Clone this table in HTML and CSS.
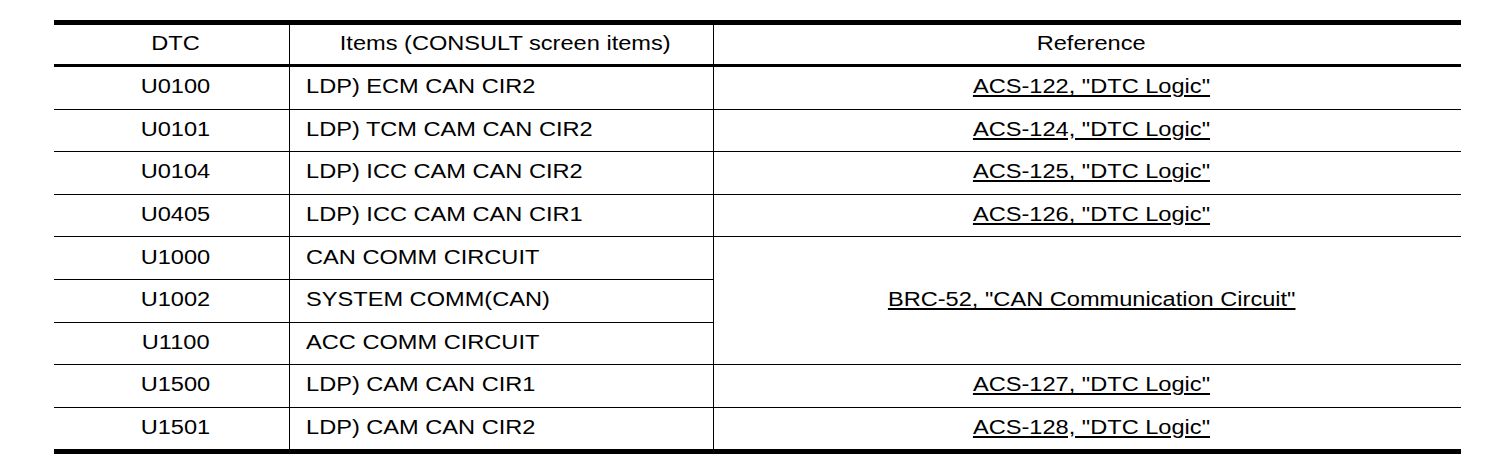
FILE: index.html
```html
<!DOCTYPE html>
<html>
<head>
<meta charset="utf-8">
<link rel="stylesheet" href="styles.css">
</head>
<body>
<table class="dtc">
  <thead>
    <tr><th class="c1"><span class="t">DTC</span></th><th class="c2"><span class="t">Items (CONSULT screen items)</span></th><th class="c3"><span class="t">Reference</span></th></tr>
  </thead>
  <tbody>
    <tr><td class="c1"><span class="t">U0100</span></td><td class="c2 item"><span class="t">LDP) ECM CAN CIR2</span></td><td class="c3"><span class="t link">ACS-122, "DTC Logic"</span></td></tr>
    <tr><td class="c1"><span class="t">U0101</span></td><td class="c2 item"><span class="t">LDP) TCM CAM CAN CIR2</span></td><td class="c3"><span class="t link">ACS-124, "DTC Logic"</span></td></tr>
    <tr><td class="c1"><span class="t">U0104</span></td><td class="c2 item"><span class="t">LDP) ICC CAM CAN CIR2</span></td><td class="c3"><span class="t link">ACS-125, "DTC Logic"</span></td></tr>
    <tr><td class="c1"><span class="t">U0405</span></td><td class="c2 item"><span class="t">LDP) ICC CAM CAN CIR1</span></td><td class="c3"><span class="t link">ACS-126, "DTC Logic"</span></td></tr>
    <tr><td class="c1"><span class="t">U1000</span></td><td class="c2 item"><span class="t">CAN COMM CIRCUIT</span></td><td class="c3" rowspan="3"><span class="t link">BRC-52, "CAN Communication Circuit"</span></td></tr>
    <tr><td class="c1"><span class="t">U1002</span></td><td class="c2 item"><span class="t">SYSTEM COMM(CAN)</span></td></tr>
    <tr><td class="c1"><span class="t">U1100</span></td><td class="c2 item"><span class="t">ACC COMM CIRCUIT</span></td></tr>
    <tr><td class="c1"><span class="t">U1500</span></td><td class="c2 item"><span class="t">LDP) CAM CAN CIR1</span></td><td class="c3"><span class="t link">ACS-127, "DTC Logic"</span></td></tr>
    <tr><td class="c1"><span class="t">U1501</span></td><td class="c2 item"><span class="t">LDP) CAM CAN CIR2</span></td><td class="c3"><span class="t link">ACS-128, "DTC Logic"</span></td></tr>
  </tbody>
</table>
</body>
</html>
```

FILE: styles.css
```css
html, body {
  margin: 0;
  padding: 0;
  background: #fff;
}
body {
  padding: 20px 0 0 54px;
}
.dtc {
  border-collapse: collapse;
  width: 1407px;
  font-family: "Liberation Sans", Arial, sans-serif;
  font-size: 20px;
  line-height: 1;
  color: #000;
  table-layout: fixed;
  border-top: 5px solid #000;
  border-bottom: 5px solid #000;
}
.dtc th, .dtc td {
  padding: 0 0 3px 8px;
  font-weight: normal;
  text-align: center;
  vertical-align: middle;
  border-left: 1px solid #000;
  border-top: 1px solid #000;
}
.dtc th {
  height: 36px;
  border-top: none;
  border-bottom: 3px solid #000;
}
.dtc td {
  height: 38.6px;
}
.dtc .c1 { width: 227px; border-left: none; }
.dtc .c2 { width: 415px; }
.dtc .c3 { width: auto; }
.dtc td.item {
  text-align: left;
  padding-left: 16px;
}
.t {
  display: inline-block;
  transform: scaleX(1.18);
  transform-origin: center;
}
.item .t {
  transform-origin: left center;
}
.link {
  text-decoration: underline;
  text-underline-offset: 2px;
}
```
